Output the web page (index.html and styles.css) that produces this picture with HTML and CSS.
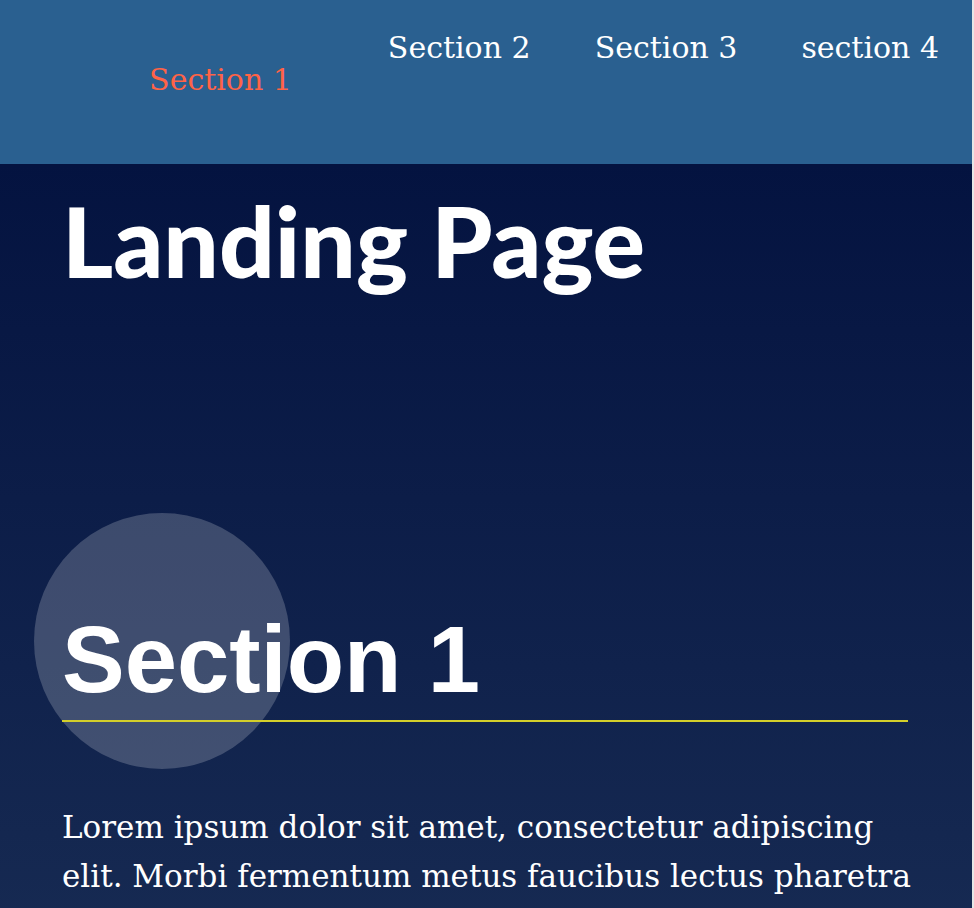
FILE: index.html
```html
<!DOCTYPE html>
<html lang="en">
<head>
<meta charset="utf-8">
<title>Landing Page</title>
<link rel="stylesheet" href="styles.css">
</head>
<body>
<header class="page-header">
  <nav class="navbar">
    <ul class="nav-list">
      <li class="nav-item active"><a href="#section1">Section 1</a></li>
      <li class="nav-item"><a href="#section2">Section 2</a></li>
      <li class="nav-item"><a href="#section3">Section 3</a></li>
      <li class="nav-item"><a href="#section4">section 4</a></li>
    </ul>
  </nav>
</header>
<main class="main">
  <header class="hero">
    <h1 class="title">Landing Page</h1>
  </header>
  <section class="section" id="section1">
    <div class="section-container">
      <h2 class="section-heading">Section 1</h2>
      <p class="section-text">Lorem ipsum dolor sit amet, consectetur adipiscing elit. Morbi fermentum metus faucibus lectus pharetra</p>
    </div>
  </section>
</main>
</body>
</html>
```
FILE: styles.css
```css
html {
  background: #e6e6e6;
}
body {
  margin: 0;
  width: calc(100% - 2px);
  height: 908px;
  background: linear-gradient(180deg, #041340 0px, #041340 164px, #182c54 1000px);
  font-family: "DejaVu Serif", serif;
  color: #fff;
  overflow: hidden;
}
.page-header {
  background: #2a6090;
  height: 164px;
}
.nav-list {
  list-style: none;
  margin: 0;
  padding: 26px 33px 0 0;
  display: flex;
  justify-content: flex-end;
  align-items: flex-start;
  gap: 64px;
}
.nav-item a {
  color: #fff;
  text-decoration: none;
  font-size: 30px;
  line-height: 44px;
}
.nav-item.active {
  margin-top: 32px;
  margin-right: 32px;
}
.nav-item.active a {
  color: #ff6347;
}
.main {
  padding: 0 64px 0 62px;
}
.hero {
  height: 350px;
}
.title {
  margin: 0;
  padding-top: 16px;
  font-family: "Lato", sans-serif;
  font-weight: 900;
  font-size: 98px;
  line-height: 120px;
  letter-spacing: 0;
}
.section-container {
  position: relative;
}
.section-container::before {
  content: "";
  position: absolute;
  left: -28px;
  top: -1px;
  width: 256px;
  height: 256px;
  border-radius: 50%;
  background: rgba(255, 255, 255, 0.2);
}
.section-heading {
  position: relative;
  margin: 0;
  padding-top: 86px;
  font-family: "Liberation Sans", Arial, sans-serif;
  font-weight: 700;
  font-size: 94px;
  line-height: 120px;
  border-bottom: 2px solid #d4cf2a;
}
.section-text {
  margin: 81px -8px 0 0;
  font-size: 31px;
  line-height: 49px;
}
```
